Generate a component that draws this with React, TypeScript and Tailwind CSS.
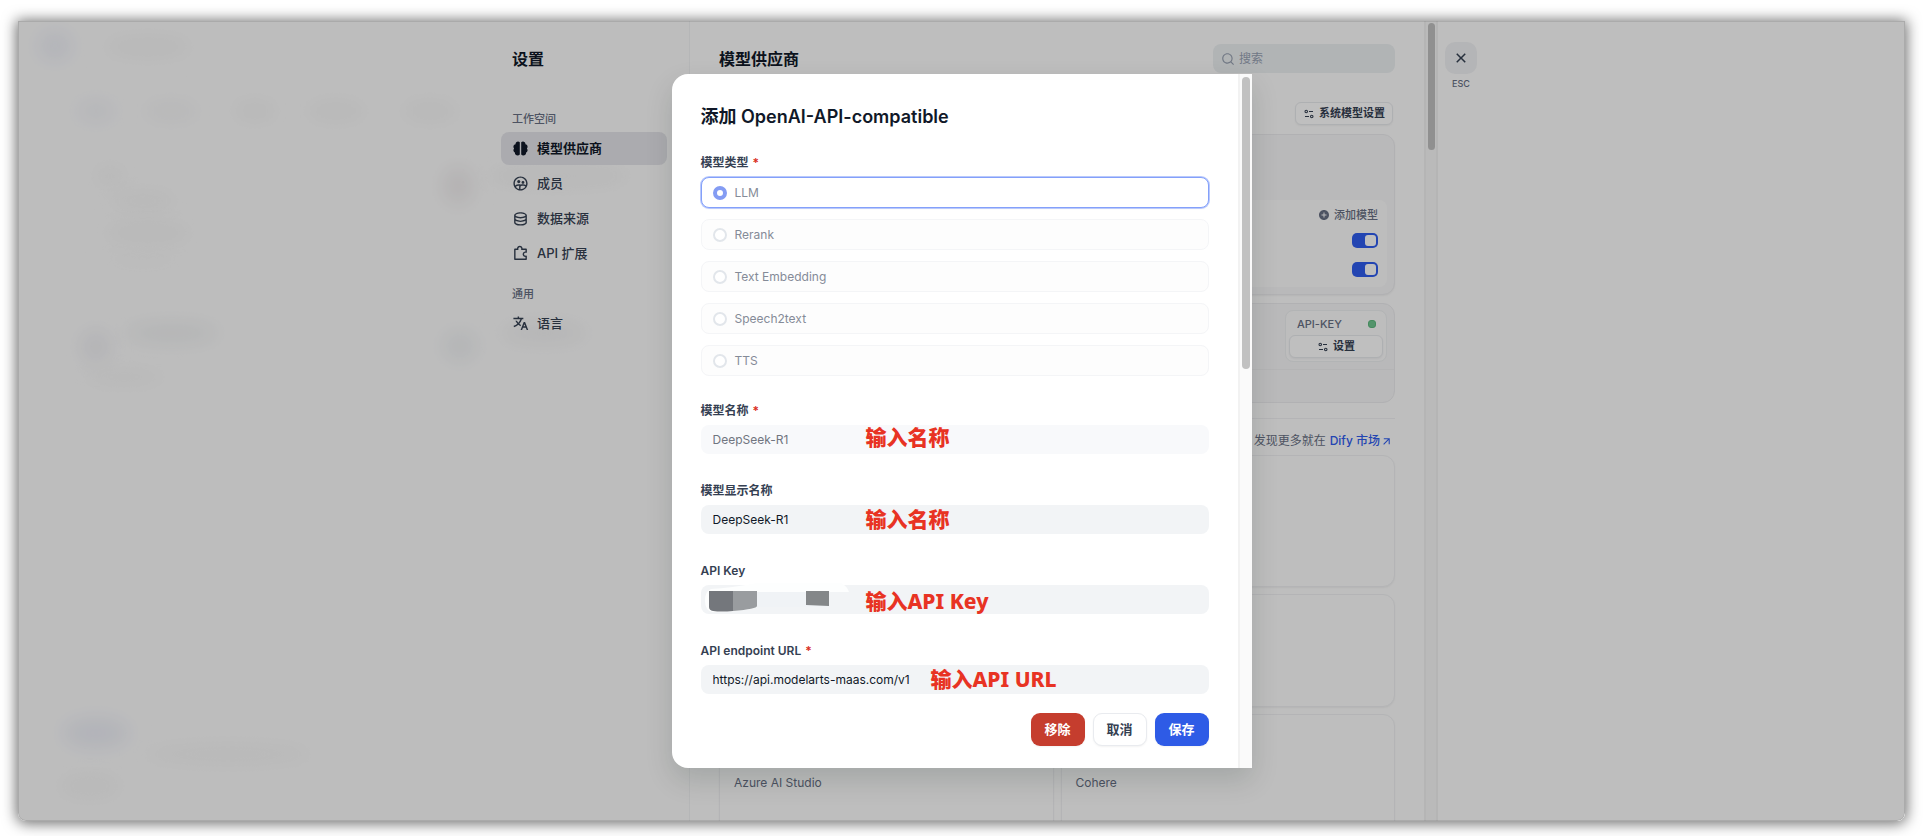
// App.tsx — model provider settings with the "add model" dialog open

import { useState } from "react";
import type { ReactNode } from "react";
import type { IconType } from "react-icons";
import {
  RiAddCircleFill,
  RiArrowRightUpLine,
  RiBrain2Fill,
  RiCloseLine,
  RiDatabase2Line,
  RiEqualizer2Line,
  RiGroup2Line,
  RiPuzzle2Line,
  RiSearchLine,
  RiTranslate2,
} from "react-icons/ri";

// ── Sidebar ───────────────────────────────────────────────────────────────────
interface NavItem {
  label: string;
  icon:  IconType;
}

const WORKSPACE: NavItem[] = [
  { label: "模型供应商", icon: RiBrain2Fill },
  { label: "成员",       icon: RiGroup2Line },
  { label: "数据来源",   icon: RiDatabase2Line },
  { label: "API 扩展",   icon: RiPuzzle2Line },
];

const GENERAL: NavItem[] = [{ label: "语言", icon: RiTranslate2 }];

function NavGroup({ title, items, active }: { title: string; items: NavItem[]; active?: string }) {
  return (
    <div>
      <div className="pl-[11px] text-[11px] leading-4 font-medium text-[#676f83]">{title}</div>
      <ul className="mt-[5px] flex flex-col gap-[2px]">
        {items.map(({ label, icon: Icon }) => (
          <li key={label}>
            <button
              className={
                label === active
                  ? "flex h-[33px] w-full items-center gap-2 rounded-lg bg-[#e5e5ea] pl-[11px] text-[13px] font-bold text-[#101828]"
                  : "flex h-[33px] w-full items-center gap-2 rounded-lg pl-[11px] text-[13px] font-medium text-[#354052]"
              }
            >
              <Icon className="size-[17px]" />
              {label}
            </button>
          </li>
        ))}
      </ul>
    </div>
  );
}

function Sidebar() {
  return (
    <nav className="flex justify-end border-r border-[#f2f3f5] pt-[26px] pr-[22px]">
      <div className="w-[166px]">
        <h1 className="pl-[11px] text-base leading-6 font-bold text-[#101828]">设置</h1>
        <div className="mt-10 flex flex-col gap-4">
          <NavGroup title="工作空间" items={WORKSPACE} active="模型供应商" />
          <NavGroup title="通用" items={GENERAL} />
        </div>
      </div>
    </nav>
  );
}

// ── Provider list ─────────────────────────────────────────────────────────────
function Toggle({ label }: { label: string }) {
  const [on, setOn] = useState(true);
  return (
    <button
      role="switch"
      aria-checked={on}
      aria-label={label}
      onClick={() => setOn(!on)}
      className={
        on
          ? "flex h-[15px] w-[26px] items-center justify-end rounded-[5px] bg-[#2f5cee] px-[2px]"
          : "flex h-[15px] w-[26px] items-center justify-start rounded-[5px] bg-[#e9ebf0] px-[2px]"
      }
    >
      <span className="h-[11px] w-[11px] rounded-[3px] bg-white" />
    </button>
  );
}

function SmallButton({ children, wide }: { children: ReactNode; wide?: boolean }) {
  return (
    <button
      className={`flex h-[23px] items-center justify-center gap-1 rounded-md border border-[#e9ebee] bg-white px-[7px] text-[11px] font-semibold text-[#354052] shadow-xs ${wide ? "w-full" : ""}`}
    >
      <RiEqualizer2Line className="size-3" />
      {children}
    </button>
  );
}

function ProviderCard({ name }: { name?: string }) {
  return (
    <div className="rounded-xl border border-[#f0f1f3] bg-[#fefefe] px-[14px] pt-[60px] text-[12px] leading-4 text-[#676f83] shadow-xs">
      {name}
    </div>
  );
}

function ProviderList() {
  return (
    <main className="min-w-0 flex-1 px-[29px] pt-[23px]">
      <div className="flex items-center justify-between">
        <h2 className="text-base leading-6 font-bold text-[#101828]">模型供应商</h2>
        <label className="flex h-[29px] w-[182px] items-center gap-1 rounded-lg bg-[#edf0f2] pl-2">
          <RiSearchLine className="size-[14px] shrink-0 text-[#98a2b2]" />
          <input
            aria-label="搜索"
            placeholder="搜索"
            className="w-full min-w-0 bg-transparent text-[12px] outline-none placeholder:text-[#98a2b2]"
          />
        </label>
      </div>

      <div className="mt-[29px] flex justify-end pr-[2px]">
        <SmallButton>系统模型设置</SmallButton>
      </div>

      <section className="mt-[9px] rounded-xl border border-[#ececef] bg-[#f7f7f8] px-[7px] pt-[65px] pb-[7px] shadow-xs">
        <div className="flex flex-col items-end rounded-lg bg-[#fdfdfd] pt-[7px] pr-[9px] pb-[10px]">
          <button className="flex h-4 items-center gap-1 text-[11px] font-medium text-[#676f83]">
            <RiAddCircleFill className="size-3" />
            添加模型
          </button>
          <div className="mt-[10px] flex flex-col gap-[14px]">
            <Toggle label="启用模型 1" />
            <Toggle label="启用模型 2" />
          </div>
        </div>
      </section>

      <section className="mt-2 rounded-xl border border-[#ececef] bg-[#f7f7f8]">
        <div className="flex justify-end border-b border-[#f0f0f2] px-[7px] pt-[6px] pb-[7px]">
          <div className="w-[102px] rounded-lg border border-[#eef0f2] bg-[#fcfcfd] px-[3px] pt-[2px] pb-[3px]">
            <div className="flex h-[22px] items-center justify-between pr-[7px] pl-2 text-[11px] font-medium text-[#676f83]">
              API-KEY
              <span className="size-2 rounded-[3px] border border-[#5cb87d] bg-[#6fc68f]" />
            </div>
            <SmallButton wide>设置</SmallButton>
          </div>
        </div>
        <div className="h-8" />
      </section>

      <div className="mt-[15px] flex justify-end border-t border-[#f0f1f3] pt-[14px] pr-[2px] text-[12px] leading-4 text-[#676f83]">
        <span>发现更多就在</span>
        <a href="#market" className="ml-1 flex items-center font-medium text-[#2f5cee]">
          Dify 市场
          <RiArrowRightUpLine className="size-[13px]" />
        </a>
      </div>

      <div className="mt-[6px] grid grid-cols-2 grid-rows-[132px_113px_140px] gap-x-[7px] gap-y-[7px]">
        <ProviderCard />
        <ProviderCard />
        <ProviderCard />
        <ProviderCard />
        <ProviderCard name="Azure AI Studio" />
        <ProviderCard name="Cohere" />
      </div>
    </main>
  );
}

// ── Dialog ────────────────────────────────────────────────────────────────────
const MODEL_TYPES = ["LLM", "Rerank", "Text Embedding", "Speech2text", "TTS"];

function Required() {
  return <span className="ml-1 text-[#d92d20]">*</span>;
}

interface FieldProps {
  id:        string;
  label:     string;
  value:     string;
  note:      string;
  notePlace: string;
  required?: boolean;
  disabled?: boolean;
  children?: ReactNode;
}

function Field({ id, label, value, note, notePlace, required, disabled, children }: FieldProps) {
  return (
    <div>
      <label htmlFor={id} className="block text-[12px] leading-4 font-semibold text-[#354052]">
        {label}
        {required && <Required />}
      </label>
      <div className="relative mt-[6px]">
        <input
          id={id}
          defaultValue={value}
          disabled={disabled}
          className="h-[29px] w-full rounded-lg bg-[#f2f4f6] px-3 text-[12px] text-[#101828] outline-none disabled:bg-[#f8f9fb] disabled:text-[#70757f]"
        />
        {children}
        <span
          className={`pointer-events-none absolute font-['Noto_Sans','Noto_Sans_CJK_SC',sans-serif] text-[21px] leading-7 font-extrabold whitespace-nowrap text-[#e83323] ${notePlace}`}
        >
          {note}
        </span>
      </div>
    </div>
  );
}

// brush marks hiding the stored key
function KeyMask() {
  return (
    <svg
      aria-hidden="true"
      className="pointer-events-none absolute -top-[2px] left-0"
      width="160"
      height="32"
      viewBox="0 0 160 32"
    >
      <path d="M4 18 Q4 8 10 6 Q30 5 56 0 H140 Q146 3 148 9 H56 V24 Q40 29 12 29 Q4 28 4 18Z" fill="#fdfefe" />
      <path d="M56 9 H128 V24 H56Z" fill="#f0f3f6" />
      <path d="M8 8 H32 V28 Q20 29 12 28 Q8 27 8 24Z" fill="#74777c" />
      <path d="M32 8 H56 V23 Q56 26 32 28Z" fill="#999c9f" />
      <path d="M105 8 H128 V23 L105 22Z" fill="#848789" />
    </svg>
  );
}

function AddModelDialog() {
  return (
    <div
      role="dialog"
      aria-labelledby="dialog-title"
      className="flex w-[580px] overflow-hidden rounded-l-2xl bg-white shadow-[0_12px_28px_rgba(9,30,20,0.14)]"
    >
      <form className="flex-1 px-[29px] pt-[29px] pb-[22px]" onSubmit={(e) => e.preventDefault()}>
        <h3 id="dialog-title" className="text-[18px] leading-7 font-semibold text-[#101828]">
          添加 OpenAI-API-compatible
        </h3>

        <fieldset className="mt-6">
          <legend className="text-[12px] leading-4 font-semibold text-[#354052]">
            模型类型
            <Required />
          </legend>
          <div className="mt-[6px] flex flex-col gap-[11px]">
            {MODEL_TYPES.map((type, i) => (
              <label
                key={type}
                className={
                  i === 0
                    ? "flex h-[31px] items-center gap-2 rounded-lg border border-[#84a0fa] bg-white pl-[11px] text-[12px] text-[#858b98] shadow-xs ring-1 ring-[#b9c9fc]"
                    : "flex h-[31px] items-center gap-2 rounded-lg border border-[#f4f5f7] bg-[#fdfdfd] pl-[11px] text-[12px] text-[#858b98]"
                }
              >
                <input
                  type="radio"
                  name="model-type"
                  disabled
                  defaultChecked={i === 0}
                  className="size-[14px] appearance-none rounded-full border-2 border-[#e2e6eb] bg-white checked:border-4 checked:border-[#849cf3]"
                />
                {type}
              </label>
            ))}
          </div>
        </fieldset>

        <div className="mt-[27px] flex flex-col gap-[29px]">
          <Field
            id="model-name"
            label="模型名称"
            value="DeepSeek-R1"
            note="输入名称"
            notePlace="-top-[2px] left-[165px]"
            required
            disabled
          />
          <Field
            id="display-name"
            label="模型显示名称"
            value="DeepSeek-R1"
            note="输入名称"
            notePlace="top-0 left-[165px]"
          />
          <Field id="api-key" label="API Key" value="" note="输入API Key" notePlace="top-[2px] left-[165px]">
            <KeyMask />
          </Field>
          <Field
            id="endpoint"
            label="API endpoint URL"
            value="https://api.modelarts-maas.com/v1"
            note="输入API URL"
            notePlace="top-0 left-[230px]"
            required
          />
        </div>

        <div className="mt-[19px] flex justify-end gap-2 text-[13px] font-semibold">
          <button className="h-[33px] w-[54px] rounded-[9px] bg-[#c53d2e] text-white shadow-xs">移除</button>
          <button className="h-[33px] w-[54px] rounded-[9px] border border-[#e9ebef] bg-white text-[#354052] shadow-xs">
            取消
          </button>
          <button className="h-[33px] w-[54px] rounded-[9px] bg-[#2e5be6] text-white shadow-xs">保存</button>
        </div>
      </form>
      <div className="w-[14px] border-l-2 border-[#f2f2f2] bg-[#fafafa] pt-[3px] pl-[2px]">
        <div className="h-[292px] w-2 rounded-full bg-[#c1c1c1]" />
      </div>
    </div>
  );
}

// ── Frosted page behind the settings ──────────────────────────────────────────
const BLOBS: [number, number, number, number, string][] = [
  [37, 25, 17, 15, "#eef0f8"],
  [130, 26, 46, 12, "#f7f7f7"],
  [78, 90, 20, 11, "#f2f3f8"],
  [153, 90, 30, 12, "#f7f7f8"],
  [237, 90, 24, 12, "#f7f7f7"],
  [318, 90, 32, 12, "#f7f7f7"],
  [412, 90, 30, 12, "#f7f7f7"],
  [92, 155, 18, 12, "#f8f8f8"],
  [125, 180, 36, 12, "#f8f8f8"],
  [130, 212, 46, 12, "#f7f7f7"],
  [125, 238, 40, 9, "#f9f9f9"],
  [440, 165, 15, 19, "#f0edee"],
  [540, 155, 74, 12, "#f6f6f6"],
  [78, 326, 15, 17, "#efeff3"],
  [154, 312, 48, 10, "#f0f1f2"],
  [106, 356, 44, 9, "#f7f7f7"],
  [442, 325, 17, 15, "#eff1f3"],
  [526, 312, 44, 10, "#f2f2f3"],
  [78, 712, 34, 15, "#edeff7"],
  [210, 733, 88, 12, "#f8f8f8"],
  [72, 765, 34, 14, "#f8f8f8"],
];

function Backdrop() {
  return (
    <svg aria-hidden="true" className="absolute inset-0 h-full w-full">
      <filter id="frost" x="-100%" y="-200%" width="300%" height="500%">
        <feGaussianBlur stdDeviation="10" />
      </filter>
      {BLOBS.map(([cx, cy, rx, ry, fill]) => (
        <ellipse key={`${cx}-${cy}`} cx={cx} cy={cy} rx={rx} ry={ry} fill={fill} filter="url(#frost)" />
      ))}
    </svg>
  );
}

// ── App ───────────────────────────────────────────────────────────────────────
export default function App() {
  return (
    <div className="h-screen bg-white pt-[21px] pr-[19px] pb-[15px] pl-[18px] font-[Inter,'Noto_Sans_CJK_SC',sans-serif]">
      <div className="relative h-full overflow-hidden rounded-b-lg bg-[#fdfdfd] shadow-[0_1px_14px_2px_rgba(0,0,0,0.55)]">
        <Backdrop />
        <div className="relative grid h-full grid-cols-[minmax(190px,672fr)_748px_minmax(60px,467fr)]">
          <Sidebar />

          <div className="flex min-w-0 overflow-hidden bg-[#fefefe]">
            <ProviderList />
            <div className="w-[14px] border-x-2 border-[#f2f2f2] bg-[#f9f9f9] pt-[2px] pl-[2px]">
              <div className="h-[127px] w-[7px] rounded-full bg-[#c1c1c1]" />
            </div>
          </div>

          <div className="bg-[#fefefe] pt-[21px] pl-[7px]">
            <div className="flex w-8 flex-col items-center">
              <button
                aria-label="关闭"
                className="flex size-8 items-center justify-center rounded-[10px] bg-[#f1f2f4] text-[#354052]"
              >
                <RiCloseLine className="size-[18px]" />
              </button>
              <span className="mt-1 text-[9px] leading-3 font-medium text-[#676f83]">ESC</span>
            </div>
          </div>
        </div>

        <div className="absolute inset-0 flex items-center justify-center rounded-b-lg border border-black/10 bg-black/25">
          <AddModelDialog />
        </div>
      </div>
    </div>
  );
}
